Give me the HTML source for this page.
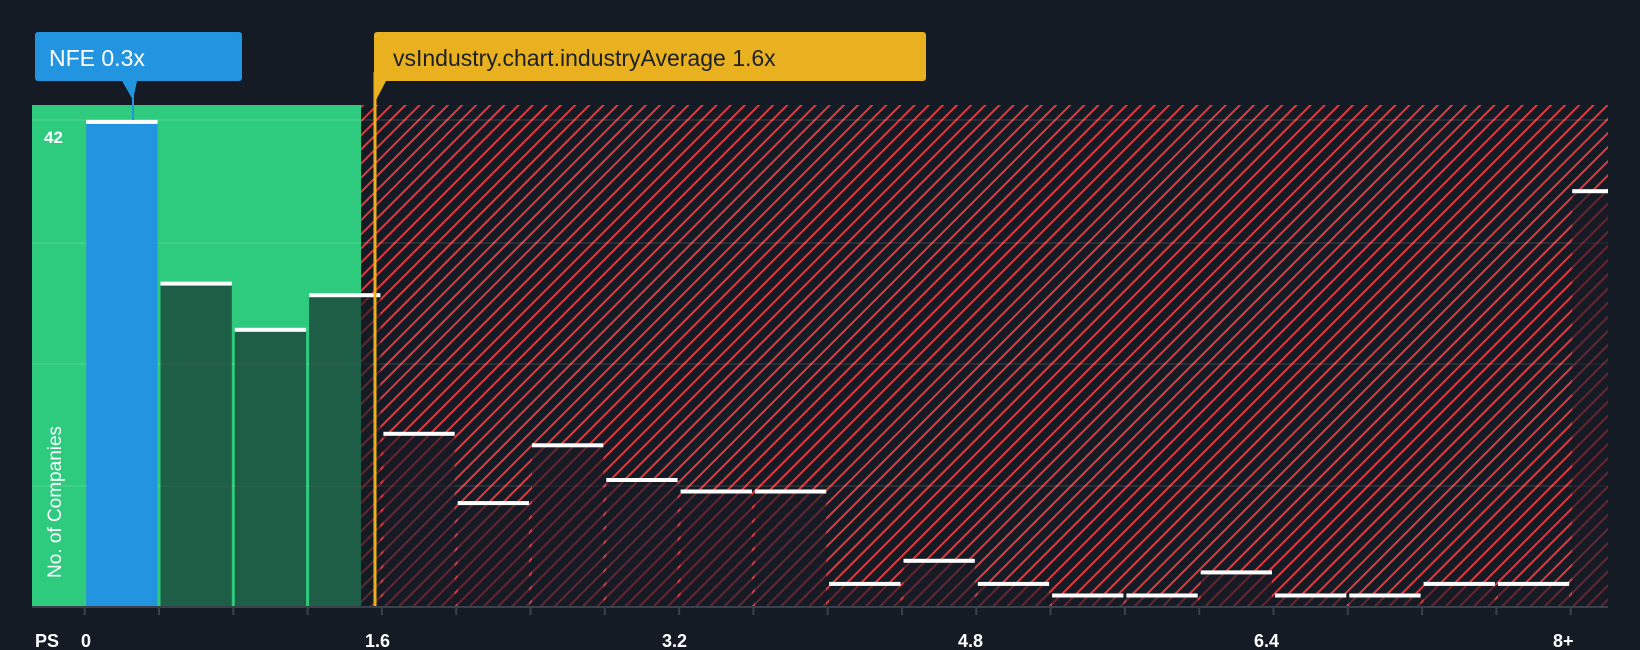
<!DOCTYPE html>
<html><head><meta charset="utf-8"><style>
html,body{margin:0;padding:0;background:#151b24;}
svg{display:block;font-family:"Liberation Sans",sans-serif;}
</style></head><body>
<svg width="1640" height="650" viewBox="0 0 1640 650" xmlns="http://www.w3.org/2000/svg">
<defs>
<pattern id="h" patternUnits="userSpaceOnUse" width="10" height="10" patternTransform="rotate(45)">
<rect width="10" height="10" fill="#151b24"/>
<rect x="0" y="0" width="2" height="10" fill="#e0393e"/>
</pattern>
</defs>
<rect x="0" y="0" width="1640" height="650" fill="#151b24"/>
<rect x="361" y="105" width="1247" height="502" fill="url(#h)"/>
<rect x="32" y="105" width="329" height="502" fill="#2ecb7f"/>
<g stroke="rgba(255,255,255,0.12)" stroke-width="1.5">
<line x1="32" x2="1608" y1="120" y2="120"/><line x1="32" x2="1608" y1="243" y2="243"/>
<line x1="32" x2="1608" y1="364" y2="364"/><line x1="32" x2="1608" y1="486" y2="486"/>
</g>
<g>
<rect x="86.2" y="121.9" width="71.3" height="485.1" fill="#2394df"/>
<rect x="160.5" y="283.6" width="71.3" height="323.4" fill="rgba(21,27,36,0.62)"/>
<rect x="234.8" y="329.8" width="71.3" height="277.2" fill="rgba(21,27,36,0.62)"/>
<rect x="309.1" y="295.2" width="71.3" height="311.8" fill="rgba(21,27,36,0.62)"/>
<rect x="383.4" y="433.8" width="71.3" height="173.2" fill="rgba(21,27,36,0.6)"/>
<rect x="457.7" y="503.1" width="71.3" height="103.9" fill="rgba(21,27,36,0.6)"/>
<rect x="532" y="445.3" width="71.3" height="161.7" fill="rgba(21,27,36,0.6)"/>
<rect x="606.3" y="480" width="71.3" height="127" fill="rgba(21,27,36,0.6)"/>
<rect x="680.6" y="491.5" width="71.3" height="115.5" fill="rgba(21,27,36,0.6)"/>
<rect x="754.9" y="491.5" width="71.3" height="115.5" fill="rgba(21,27,36,0.6)"/>
<rect x="829.2" y="583.9" width="71.3" height="23.1" fill="rgba(21,27,36,0.6)"/>
<rect x="903.5" y="560.8" width="71.3" height="46.2" fill="rgba(21,27,36,0.6)"/>
<rect x="977.8" y="583.9" width="71.3" height="23.1" fill="rgba(21,27,36,0.6)"/>
<rect x="1052.1" y="595.5" width="71.3" height="11.5" fill="rgba(21,27,36,0.6)"/>
<rect x="1126.4" y="595.5" width="71.3" height="11.5" fill="rgba(21,27,36,0.6)"/>
<rect x="1200.7" y="572.4" width="71.3" height="34.6" fill="rgba(21,27,36,0.6)"/>
<rect x="1275" y="595.5" width="71.3" height="11.5" fill="rgba(21,27,36,0.6)"/>
<rect x="1349.3" y="595.5" width="71.3" height="11.5" fill="rgba(21,27,36,0.6)"/>
<rect x="1423.6" y="583.9" width="71.3" height="23.1" fill="rgba(21,27,36,0.6)"/>
<rect x="1497.9" y="583.9" width="71.3" height="23.1" fill="rgba(21,27,36,0.6)"/>
<rect x="1572.2" y="191.2" width="35.8" height="415.8" fill="rgba(21,27,36,0.6)"/>
</g>
<g fill="#fff">
<rect x="86.2" y="119.9" width="71.3" height="4"/>
<rect x="160.5" y="281.6" width="71.3" height="4"/>
<rect x="234.8" y="327.8" width="71.3" height="4"/>
<rect x="309.1" y="293.2" width="71.3" height="4"/>
<rect x="383.4" y="431.8" width="71.3" height="4"/>
<rect x="457.7" y="501.1" width="71.3" height="4"/>
<rect x="532" y="443.3" width="71.3" height="4"/>
<rect x="606.3" y="478" width="71.3" height="4"/>
<rect x="680.6" y="489.5" width="71.3" height="4"/>
<rect x="754.9" y="489.5" width="71.3" height="4"/>
<rect x="829.2" y="581.9" width="71.3" height="4"/>
<rect x="903.5" y="558.8" width="71.3" height="4"/>
<rect x="977.8" y="581.9" width="71.3" height="4"/>
<rect x="1052.1" y="593.5" width="71.3" height="4"/>
<rect x="1126.4" y="593.5" width="71.3" height="4"/>
<rect x="1200.7" y="570.4" width="71.3" height="4"/>
<rect x="1275" y="593.5" width="71.3" height="4"/>
<rect x="1349.3" y="593.5" width="71.3" height="4"/>
<rect x="1423.6" y="581.9" width="71.3" height="4"/>
<rect x="1497.9" y="581.9" width="71.3" height="4"/>
<rect x="1572.2" y="189.2" width="35.8" height="4"/>
</g>
<line x1="375" y1="72" x2="375" y2="607" stroke="#e9b11f" stroke-width="3"/>
<line x1="32" y1="607" x2="1608" y2="607" stroke="#3a414b" stroke-width="2"/>
<g stroke="#3a414b" stroke-width="2">
<line x1="84.7" x2="84.7" y1="607" y2="615"/><line x1="159" x2="159" y1="607" y2="615"/>
<line x1="233.3" x2="233.3" y1="607" y2="615"/><line x1="307.6" x2="307.6" y1="607" y2="615"/>
<line x1="381.9" x2="381.9" y1="607" y2="615"/><line x1="456.2" x2="456.2" y1="607" y2="615"/>
<line x1="530.5" x2="530.5" y1="607" y2="615"/><line x1="604.8" x2="604.8" y1="607" y2="615"/>
<line x1="679.1" x2="679.1" y1="607" y2="615"/><line x1="753.4" x2="753.4" y1="607" y2="615"/>
<line x1="827.7" x2="827.7" y1="607" y2="615"/><line x1="902" x2="902" y1="607" y2="615"/>
<line x1="976.3" x2="976.3" y1="607" y2="615"/><line x1="1050.6" x2="1050.6" y1="607" y2="615"/>
<line x1="1124.9" x2="1124.9" y1="607" y2="615"/><line x1="1199.2" x2="1199.2" y1="607" y2="615"/>
<line x1="1273.5" x2="1273.5" y1="607" y2="615"/><line x1="1347.8" x2="1347.8" y1="607" y2="615"/>
<line x1="1422.1" x2="1422.1" y1="607" y2="615"/><line x1="1496.4" x2="1496.4" y1="607" y2="615"/>
<line x1="1570.7" x2="1570.7" y1="607" y2="615"/>
</g>
<text x="44" y="143" fill="#fff" font-size="17" font-weight="bold">42</text>
<text transform="translate(61,502) rotate(-90)" text-anchor="middle" fill="#fff" font-size="19">No. of Companies</text>
<rect x="35" y="32" width="207" height="49" rx="3" fill="#2394df"/>
<path d="M122 81 L133 100 L137 81 Z" fill="#2394df"/>
<line x1="133" y1="81" x2="133" y2="120" stroke="#2394df" stroke-width="2"/>
<text x="49" y="66" fill="#fff" font-size="23">NFE 0.3x</text>
<rect x="374" y="32" width="552" height="49" rx="3" fill="#e9b11f"/>
<path d="M374 81 L374 104 L386 81 Z" fill="#e9b11f"/>
<text x="393" y="66" fill="#1c1f24" font-size="23">vsIndustry.chart.industryAverage 1.6x</text>
<g fill="#fff" font-size="18" font-weight="bold">
<text x="35" y="647">PS</text>
<text x="81" y="647">0</text>
<text x="365" y="647">1.6</text>
<text x="662" y="647">3.2</text>
<text x="958" y="647">4.8</text>
<text x="1254" y="647">6.4</text>
<text x="1553" y="647">8+</text>
</g>
</svg>
</body></html>
